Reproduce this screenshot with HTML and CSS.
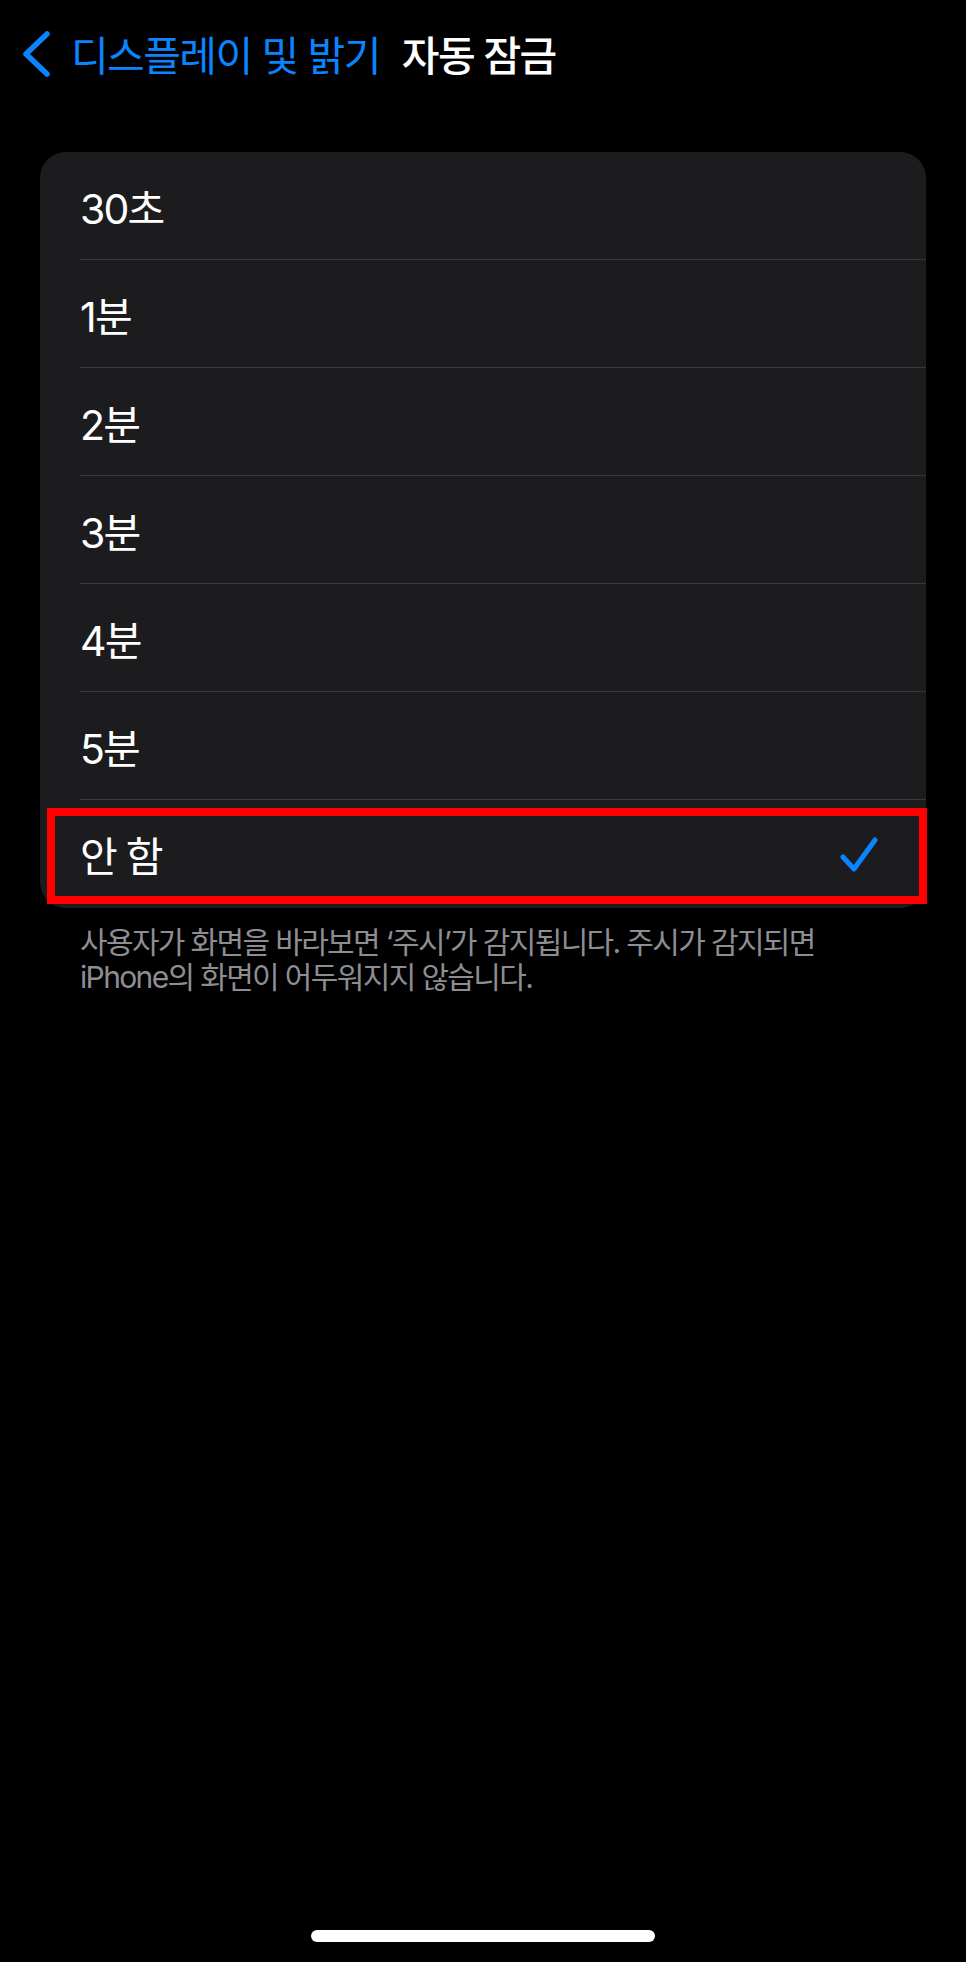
FILE: index.html
```html
<!DOCTYPE html>
<html lang="ko">
<head>
  <meta charset="UTF-8">
  <title>자동 잠금</title>
  <link rel="stylesheet" href="styles.css">
</head>
<body>
  <div class="screen">
    <div class="nav">
      <svg class="back-icon" width="32" height="50" viewBox="0 0 32 50">
        <path d="M27 5 L6 25 L27 45" fill="none" stroke="#0a84ff" stroke-width="5.5" stroke-linecap="round" stroke-linejoin="round"/>
      </svg>
      <span class="back-label">디스플레이 및 밝기</span>
      <span class="title">자동 잠금</span>
    </div>

    <div class="card">
      <div class="row">30초</div>
      <div class="row">1분</div>
      <div class="row">2분</div>
      <div class="row">3분</div>
      <div class="row">4분</div>
      <div class="row">5분</div>
      <div class="row selected">
        <span>안 함</span>
        <svg class="check" width="38" height="38" viewBox="0 0 38 38">
          <path d="M3 21 L14 33 L35 4" fill="none" stroke="#0a84ff" stroke-width="5" stroke-linecap="round" stroke-linejoin="round"/>
        </svg>
        <div class="highlight"></div>
      </div>
    </div>

    <p class="footnote">사용자가 화면을 바라보면 ‘주시’가 감지됩니다. 주시가 감지되면<br>iPhone의 화면이 어두워지지 않습니다.</p>

    <div class="home-bar"></div>
  </div>
</body>
</html>
```

FILE: styles.css
```css
body {
  margin: 0;
  background-color: #000;
  color: #fff;
  font-family: Inter, "Noto Sans CJK KR", sans-serif;
}

.screen {
  min-height: 1962px;
  display: flex;
  flex-direction: column;
}

.nav {
  height: 106px;
  display: flex;
  align-items: center;
  padding-left: 20px;
}

.back-icon {
  flex-shrink: 0;
  margin-top: 2px;
}

.back-label {
  color: #0a84ff;
  font-size: 41px;
  margin-left: 19px;
  letter-spacing: -1.6px;
}

.title {
  font-size: 41px;
  font-weight: 500;
  margin-left: 22px;
  letter-spacing: -1.6px;
}

.card {
  margin: 46px 40px 0;
  background-color: #1c1c1e;
  border-radius: 26px;
}

.row {
  position: relative;
  box-sizing: border-box;
  height: 108px;
  margin-left: 40px;
  padding-right: 48px;
  display: flex;
  align-items: center;
  justify-content: space-between;
  font-size: 41px;
  letter-spacing: -1.8px;
  border-bottom: 1px solid #38383a;
}

.row:last-child {
  border-bottom: none;
}

.check {
  margin-top: 2px;
}

.highlight {
  position: absolute;
  left: -33px;
  right: -1px;
  top: 8px;
  bottom: 4px;
  border: 8px solid #ff0000;
}

.footnote {
  margin: 17px 80px 0;
  color: #8d8d93;
  font-size: 30px;
  line-height: 35px;
  letter-spacing: -1.65px;
}

.home-bar {
  margin: auto auto 20px;
  width: 344px;
  height: 12px;
  border-radius: 6px;
  background-color: #fff;
}
```
